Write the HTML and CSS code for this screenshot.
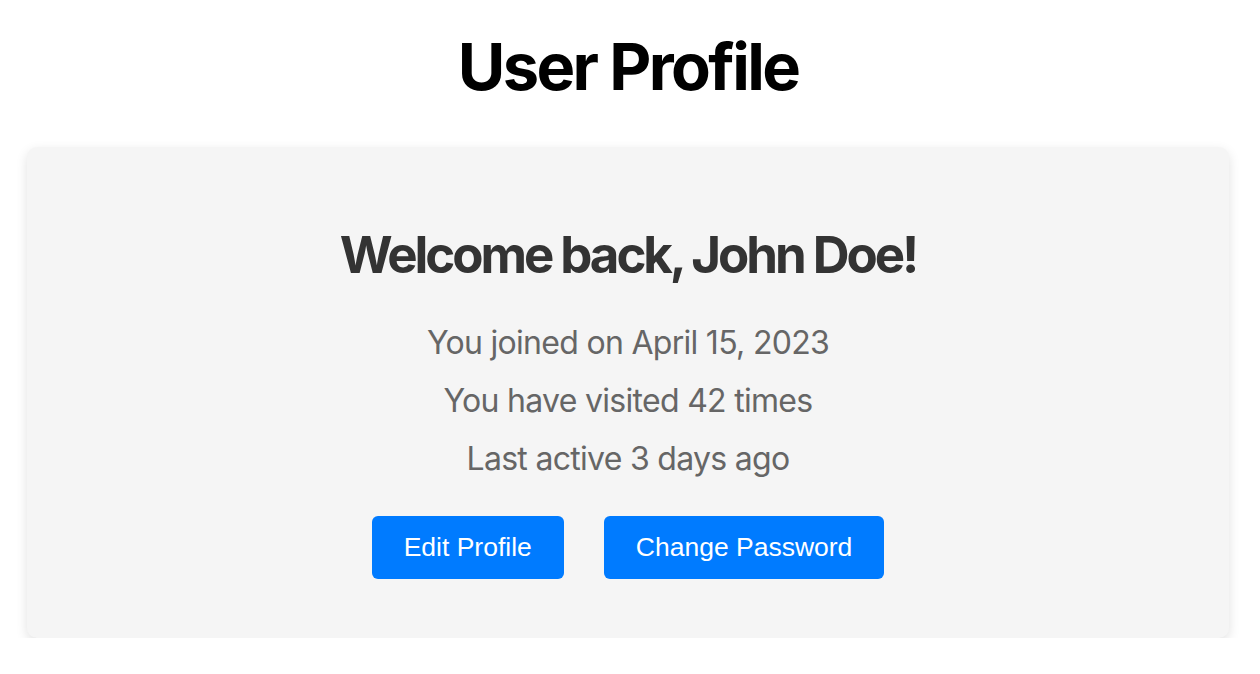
FILE: index.html
```html
<!DOCTYPE html>
<html lang="en">
<head>
<meta charset="utf-8">
<title>User Profile</title>
<link rel="stylesheet" href="styles.css">
</head>
<body>
  <main class="page">
    <h1 class="page-title">User Profile</h1>
    <section class="card">
      <h2 class="welcome">Welcome back, John Doe!</h2>
      <p class="stat">You joined on April 15, 2023</p>
      <p class="stat">You have visited 42 times</p>
      <p class="stat">Last active 3 days ago</p>
      <div class="actions">
        <button class="btn">Edit Profile</button>
        <button class="btn">Change Password</button>
      </div>
    </section>
  </main>
</body>
</html>
```
FILE: styles.css
```css
html, body {
  margin: 0;
  padding: 0;
  background: #ffffff;
}

body {
  font-family: Inter, "Noto Sans", sans-serif;
}

.page {
  padding: 27px 31px 0 27px;
  display: flex;
  flex-direction: column;
}

.page-title {
  margin: 0 0 40px;
  font-size: 65px;
  line-height: 80px;
  font-weight: 700;
  letter-spacing: -0.04em;
  color: #000;
  text-align: center;
}

.card {
  background: #f5f5f5;
  border-radius: 10px;
  box-shadow: 0 4px 12px rgba(0, 0, 0, 0.12);
  padding: 77px 20px 59px;
  display: flex;
  flex-direction: column;
  align-items: center;
  text-align: center;
}

.welcome {
  margin: 0 0 28px;
  font-size: 51px;
  line-height: 62px;
  font-weight: 700;
  letter-spacing: -0.06em;
  color: #333;
}

.stat {
  margin: 0;
  font-size: 32px;
  line-height: 58px;
  letter-spacing: -0.022em;
  color: #666;
}

.actions {
  margin-top: 28px;
  display: flex;
  gap: 40px;
}

.btn {
  font-family: "Liberation Sans", Arial, sans-serif;
  font-size: 26.5px;
  line-height: 31px;
  padding: 16px 32px;
  border: none;
  border-radius: 6px;
  background: #007bff;
  color: #fff;
}
```
